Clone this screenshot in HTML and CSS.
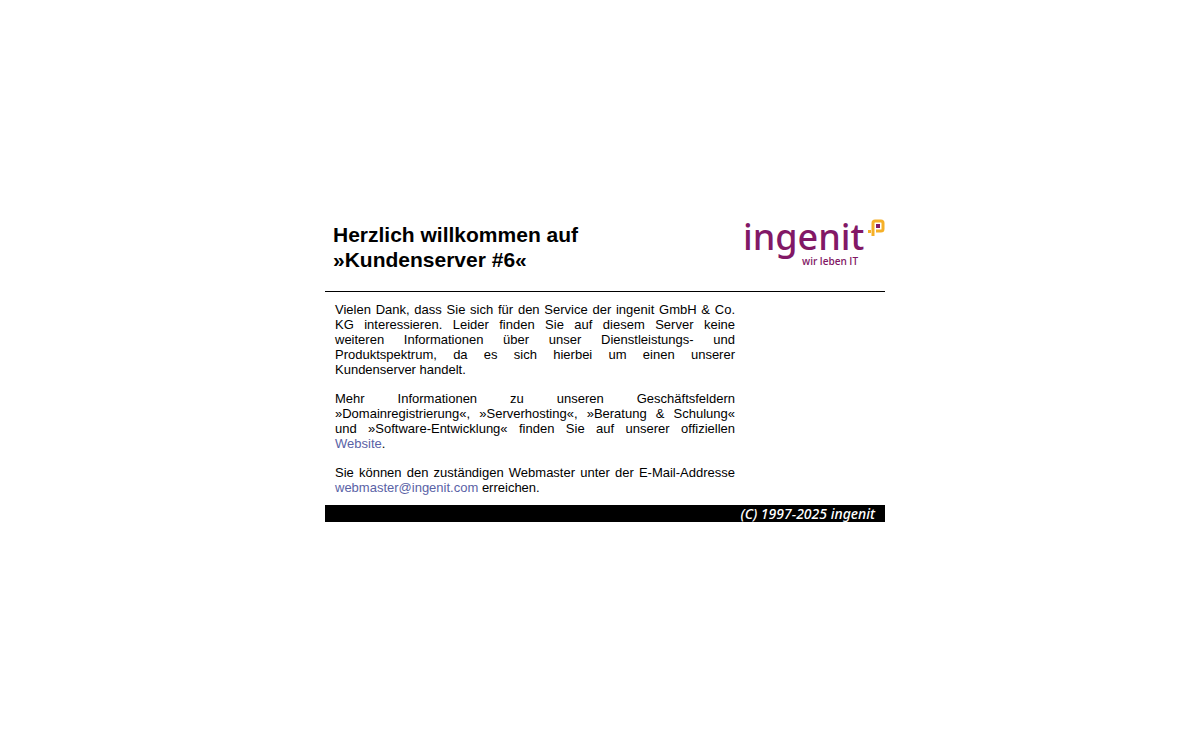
FILE: index.html
```html
<!DOCTYPE html>
<html lang="de">
<head>
<meta charset="utf-8">
<meta name="viewport" content="width=device-width, initial-scale=1">
<title>Kundenserver #6</title>
<link rel="stylesheet" href="styles.css">
</head>
<body>
<div class="card">
  <header class="head">
    <h1 class="title">Herzlich willkommen auf<br>»Kundenserver #6«</h1>
    <svg class="logo" viewBox="0 0 142 48" role="img" aria-label="ingenit – wir leben IT">
      <text class="wordmark" x="0" y="31">ingenit</text>
      <text class="claim" x="59" y="46">wir leben IT</text>
      <g class="mark">
        <path d="M130 17V4Q130 2 132 2H138Q140 2 140 4V10Q140 12 138 12H133"/>
        <rect class="dot" x="125" y="11" width="3" height="3"/>
        <rect class="core" x="133" y="5" width="4" height="4"/>
      </g>
    </svg>
  </header>
  <main class="content">
    <p>Vielen Dank, dass Sie sich für den Service der ingenit GmbH &amp; Co. KG interessieren. Leider finden Sie auf diesem Server keine weiteren&nbsp;Informationen über unser Dienstleistungs- und Produktspektrum, da es sich hierbei um einen unserer Kundenserver&nbsp;handelt.</p>
    <p>Mehr Informationen zu unseren Geschäftsfeldern »Domainregistrierung«, »Serverhosting«, »Beratung &amp; Schulung« und »Software-Entwicklung« finden Sie auf unserer offiziellen <a href="#website">Website</a>.</p>
    <p>Sie können den zuständigen Webmaster unter der E-Mail-Addresse <a href="mailto:webmaster@ingenit.com">webmaster@ingenit.com</a> erreichen.</p>
  </main>
  <footer class="foot">(C) 1997-2025 ingenit</footer>
</div>
</body>
</html>
```
FILE: styles.css
```css
* {
  box-sizing: border-box;
}

body {
  margin: 0;
  padding-left: 10px;
  min-height: 100vh;
  display: flex;
  align-items: center;
  justify-content: center;
  background: #fff;
  color: #000;
  font-family: "Liberation Sans", Arial, sans-serif;
  font-size: 13px;
  line-height: 15px;
}

.card {
  width: 100%;
  max-width: 560px;
}

.head {
  display: flex;
  justify-content: space-between;
  align-items: flex-start;
  padding: 0 0 19px 8px;
  border-bottom: 1px solid #000;
}

.title {
  margin: 3px 0 0;
  font-size: 21px;
  line-height: 25px;
}

.logo {
  flex: none;
  width: 142px;
  height: 48px;
  overflow: visible;
}

.wordmark {
  font-family: "Noto Sans", sans-serif;
  font-size: 36px;
  font-weight: 500;
  fill: #821866;
}

.claim {
  font-family: "Open Sans", sans-serif;
  font-size: 10px;
  font-weight: 600;
  fill: #821866;
}

.mark path {
  fill: none;
  stroke: #f5b028;
  stroke-width: 3;
}

.mark .dot {
  fill: #f5b028;
}

.mark .core {
  fill: #821866;
}

.content {
  max-width: 420px;
  padding: 10px;
  text-align: justify;
}

.content p {
  margin: 0 0 14px;
}

.content p:last-child {
  margin-bottom: 0;
}

.content a {
  color: #5a62a6;
  text-decoration: none;
}

.foot {
  padding-right: 10px;
  background: #000;
  color: #fff;
  font-family: "Noto Sans", sans-serif;
  font-style: italic;
  font-weight: 500;
  font-size: 14px;
  line-height: 17px;
  text-align: right;
}
```
